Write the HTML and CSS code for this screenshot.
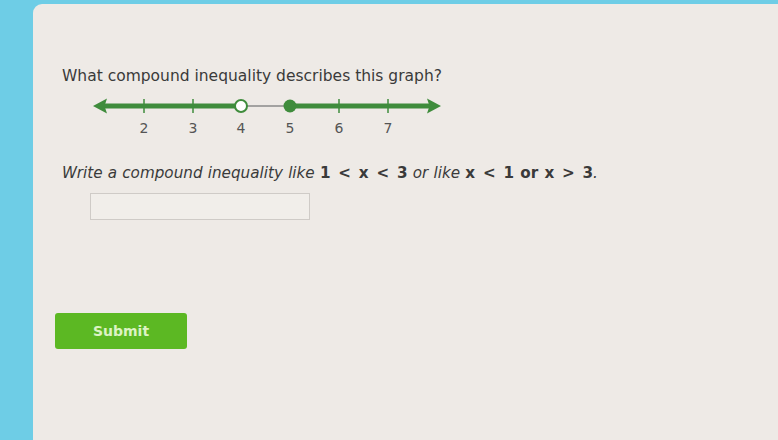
FILE: index.html
```html
<!DOCTYPE html>
<html>
<head>
<meta charset="utf-8">
<link rel="stylesheet" href="styles.css">
</head>
<body>
<div class="card">
  <p class="question">What compound inequality describes this graph?</p>
  <svg class="numline" width="350" height="45" viewBox="0 0 350 45">
    <line x1="149" y1="11" x2="198" y2="11" stroke="#8a8a8a" stroke-width="1.5"/>
    <line x1="10" y1="11" x2="143" y2="11" stroke="#3f8c3c" stroke-width="5"/>
    <line x1="198" y1="11" x2="340" y2="11" stroke="#3f8c3c" stroke-width="5"/>
    <polygon points="1,11 15,3.5 12.5,11 15,18.5" fill="#3f8c3c"/>
    <polygon points="349,11 335,3.5 337.5,11 335,18.5" fill="#3f8c3c"/>
    <g stroke="#3f8c3c" stroke-width="1.5">
      <line x1="52" y1="4" x2="52" y2="18"/>
      <line x1="101" y1="4" x2="101" y2="18"/>
      <line x1="247" y1="4" x2="247" y2="18"/>
      <line x1="296" y1="4" x2="296" y2="18"/>
    </g>
    <circle cx="149" cy="11" r="6" fill="#fff" stroke="#3f8c3c" stroke-width="2"/>
    <circle cx="198" cy="11" r="6.5" fill="#3f8c3c"/>
    <g class="lbl" text-anchor="middle">
      <text x="52" y="38">2</text>
      <text x="101" y="38">3</text>
      <text x="149" y="38">4</text>
      <text x="198" y="38">5</text>
      <text x="247" y="38">6</text>
      <text x="296" y="38">7</text>
    </g>
  </svg>
  <p class="prompt">Write a compound inequality like <b>1 &lt; x &lt; 3</b> or like <b>x &lt; 1</b> <span class="or">or</span> <b>x &gt; 3</b>.</p>
  <div class="answer"></div>
  <button class="submit">Submit</button>
</div>
</body>
</html>
```
FILE: styles.css
```css
html, body {
  margin: 0;
  height: 100%;
}
body {
  background: #6ecde6;
  padding: 4px 0 0 33px;
  box-sizing: border-box;
  overflow: hidden;
  font-family: "DejaVu Sans", Verdana, sans-serif;
}
.card {
  background: #eeeae6;
  border-radius: 9px 0 0 0;
  height: 100%;
  padding: 62px 0 0 29px;
  box-sizing: border-box;
  display: flex;
  flex-direction: column;
  align-items: flex-start;
}
.question {
  margin: 0;
  font-size: 15.5px;
  line-height: 20px;
  color: #3a3a3a;
}
.numline {
  display: block;
  margin: 9px 0 0 30px;
}
.lbl text {
  font-family: "DejaVu Sans", sans-serif;
  font-size: 14px;
  fill: #555;
}
.prompt {
  margin: 23px 0 0 0;
  font-size: 15.2px;
  line-height: 20px;
  color: #3a3a3a;
  font-style: italic;
  word-spacing: 0.4px;
}
.prompt b, .prompt .or {
  font-style: normal;
}
.prompt b {
  font-weight: bold;
  word-spacing: 2.5px;
}
.prompt .or {
  font-weight: 600;
  margin: 0 1px;
}
.answer {
  margin: 10px 0 0 28px;
  width: 218px;
  height: 25px;
  border: 1px solid #cfcbc7;
  background: #f1eeea;
}
.submit {
  margin: 93px 0 0 -7px;
  width: 132px;
  height: 36px;
  border: none;
  border-radius: 3px;
  background: #5cb823;
  color: #dcf3c4;
  font-family: "DejaVu Sans", sans-serif;
  font-size: 14px;
  font-weight: bold;
}
```
